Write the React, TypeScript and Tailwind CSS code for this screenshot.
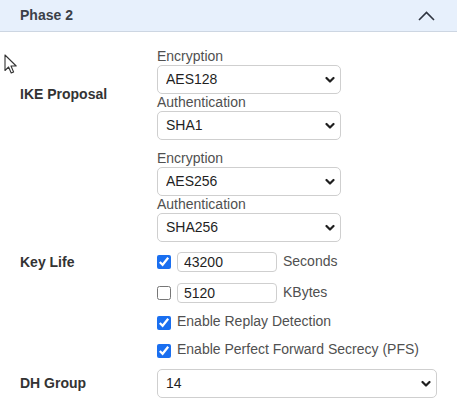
import React, { useState } from 'react';

const Chevron = () => (
  <svg width="10" height="7" viewBox="0 0 10 7" className="absolute right-[6px] top-1/2 -translate-y-1/2 pointer-events-none">
    <path d="M1.5 1.5 L5 5 L8.5 1.5" fill="none" stroke="#1f1f1f" strokeWidth="2.2" strokeLinecap="round" strokeLinejoin="round" />
  </svg>
);

interface SelectProps {
  value: string;
  options: string[];
  width: string;
}

const Select: React.FC<SelectProps> = ({ value, options, width }) => {
  const [v, setV] = useState(value);
  return (
    <div className={`relative ${width}`}>
      <select
        value={v}
        onChange={(e) => setV(e.target.value)}
        className="appearance-none w-full h-[29px] pl-[8px] pr-6 border border-[#cfcfcf] rounded-[5px] bg-white text-[14px] text-[#1f1f1f] focus:outline-none"
      >
        {options.map((o) => (
          <option key={o}>{o}</option>
        ))}
      </select>
      <Chevron />
    </div>
  );
};

const Check: React.FC<{ checked: boolean }> = ({ checked }) => {
  const [c, setC] = useState(checked);
  return (
    <input
      type="checkbox"
      checked={c}
      onChange={() => setC(!c)}
      className="w-[14px] h-[14px] m-0 accent-[#1a6ff0] shrink-0"
    />
  );
};

const Field: React.FC<{ label: string; value: string; options: string[] }> = ({ label, value, options }) => (
  <div className="flex flex-col">
    <span className="text-[14px] leading-[16px] text-[#505050]">{label}</span>
    <div className="mt-px">
      <Select value={value} options={options} width="w-[184px]" />
    </div>
  </div>
);

const encOptions = ['AES128', 'AES192', 'AES256', '3DES'];
const authOptions = ['SHA1', 'SHA256', 'SHA384', 'SHA512', 'MD5'];

export default function App() {
  return (
    <div className="relative w-[457px] h-[405px] bg-white overflow-hidden" style={{ fontFamily: '"Liberation Sans", Arial, sans-serif' }}>
      <div className="h-[32px] flex items-center justify-between pl-5 pr-[22px] bg-[#e7f0fc] border-b border-[#cdd6e2]">
        <span className="text-[14px] font-bold text-[#3b4048]">Phase 2</span>
        <svg width="17" height="10" viewBox="0 0 17 10">
          <path d="M1 9 L8.5 1.5 L16 9" fill="none" stroke="#2f3540" strokeWidth="1.6" />
        </svg>
      </div>

      {/* mouse pointer */}
      <svg width="14" height="21" viewBox="0 0 14 21" className="absolute left-[4px] top-[54px]">
        <path d="M1 1 L1 16.5 L4.6 13 L7.2 19 L9.6 18 L7 12 L12.2 12 Z" fill="white" stroke="#333" strokeWidth="1.1" strokeLinejoin="round" />
      </svg>

      <div className="flex items-center pt-[16px]">
        <div className="w-[157px] pl-5 text-[14px] font-bold text-[#333]">IKE Proposal</div>
        <div className="flex flex-col">
          <Field label="Encryption" value="AES128" options={encOptions} />
          <Field label="Authentication" value="SHA1" options={authOptions} />
        </div>
      </div>

      <div className="flex pt-[10px]">
        <div className="w-[157px]" />
        <div className="flex flex-col">
          <Field label="Encryption" value="AES256" options={encOptions} />
          <Field label="Authentication" value="SHA256" options={authOptions} />
        </div>
      </div>

      <div className="flex pt-[10px]">
        <div className="w-[157px] pl-5 text-[14px] leading-[20px] font-bold text-[#333]">Key Life</div>
        <div className="flex flex-col text-[14px] text-[#505050]">
          <div className="flex items-center h-[20px]">
            <Check checked />
            <input defaultValue="43200" className="ml-[6px] w-[100px] h-[20px] px-[6px] border border-[#cfcfcf] rounded-[4px] text-[14px] text-[#1f1f1f] focus:outline-none" />
            <span className="ml-[6px] -mt-[2px]">Seconds</span>
          </div>
          <div className="flex items-center h-[20px] mt-[11px]">
            <Check checked={false} />
            <input defaultValue="5120" className="ml-[6px] w-[100px] h-[20px] px-[6px] border border-[#cfcfcf] rounded-[4px] text-[14px] text-[#1f1f1f] focus:outline-none" />
            <span className="ml-[6px] -mt-[2px]">KBytes</span>
          </div>
          <div className="flex items-center h-[20px] mt-[10px]">
            <Check checked />
            <span className="ml-[6px] -mt-[3px]">Enable Replay Detection</span>
          </div>
          <div className="flex items-center h-[20px] mt-[8px]">
            <Check checked />
            <span className="ml-[6px] -mt-[3px]">Enable Perfect Forward Secrecy (PFS)</span>
          </div>
        </div>
      </div>

      <div className="flex items-center pt-[8px]">
        <div className="w-[157px] pl-5 text-[14px] font-bold text-[#333]">DH Group</div>
        <Select value="14" options={['1', '2', '5', '14', '15', '16', '19', '20', '21']} width="w-[280px]" />
      </div>
    </div>
  );
}
